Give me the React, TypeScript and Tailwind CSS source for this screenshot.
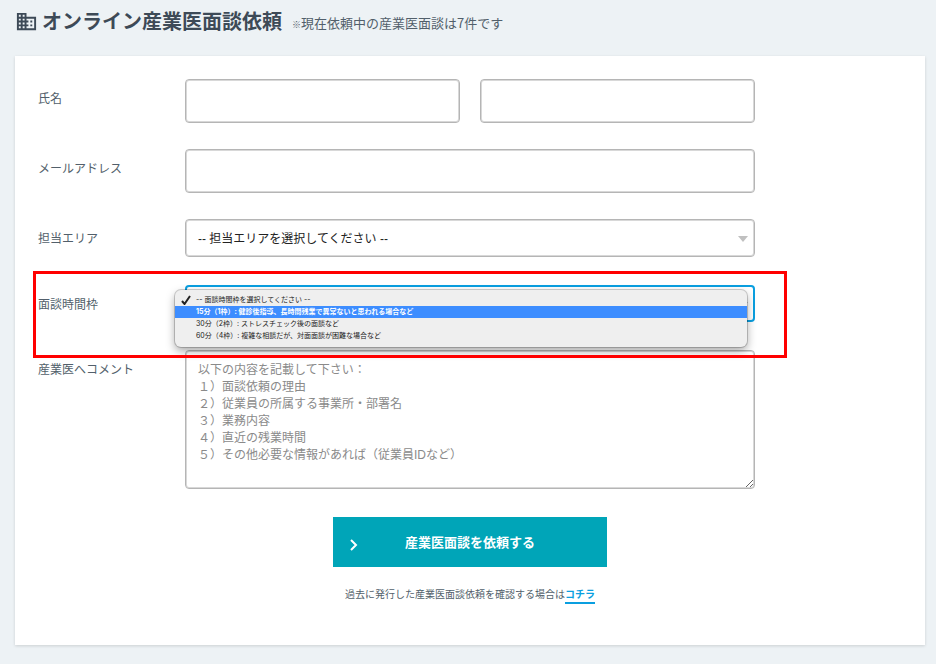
import { useState } from 'react';
import type { ReactNode } from 'react';
import { MdOutlineDomain } from 'react-icons/md';

const TIME_SLOTS = [
  { value: '', label: '-- 面談時間枠を選択してください --' },
  { value: '15', label: '15分（1枠）: 健診後指導、長時間残業で異常ないと思われる場合など' },
  { value: '30', label: '30分（2枠）: ストレスチェック後の面談など' },
  { value: '60', label: '60分（4枠）: 複雑な相談だが、対面面談が困難な場合など' },
];

const COMMENT_PLACEHOLDER = [
  '以下の内容を記載して下さい：',
  '１）面談依頼の理由',
  '２）従業員の所属する事業所・部署名',
  '３）業務内容',
  '４）直近の残業時間',
  '５）その他必要な情報があれば（従業員IDなど）',
].join('\n');

const field =
  "w-full rounded border border-[#b5b5b5] bg-white font-['Liberation_Sans','Noto_Sans_CJK_JP',sans-serif] text-xs text-[#222] shadow-[inset_0_0_0_1px_#d8d8d8] outline-none";

function Row({ label, htmlFor, children }: { label: string; htmlFor: string; children: ReactNode }) {
  return (
    <div className="relative flex items-start">
      <label htmlFor={htmlFor} className="w-[147px] shrink-0 pt-[10px] text-xs leading-[18px] text-[#525f6b]">
        {label}
      </label>
      <div className="relative min-w-0 flex-1">{children}</div>
    </div>
  );
}

function Arrow() {
  return (
    <svg viewBox="0 0 10 6" className="pointer-events-none absolute top-[17px] right-[7px] h-[6px] w-[10px] fill-[#c0c0c0]">
      <path d="M0 0h10L5 6z" />
    </svg>
  );
}

function SlotMenu({ selected, active, onSelect }: { selected: string; active: string; onSelect: (v: string) => void }) {
  return (
    <ul
      role="listbox"
      aria-label="面談時間枠"
      className="absolute top-[5px] right-2 -left-[10px] z-10 rounded-md bg-[#efefef] pt-1 pb-[5px] font-[Inter,'Noto_Sans_CJK_JP',sans-serif] text-[7px] leading-3 text-[#222] shadow-[0_0_0_1px_rgba(0,0,0,0.18),0_4px_10px_rgba(0,0,0,0.35)]"
    >
      {TIME_SLOTS.map((s) => (
        <li
          key={s.value}
          role="option"
          aria-selected={s.value === selected}
          onClick={() => onSelect(s.value)}
          className={
            s.value === active
              ? 'flex h-3 items-center bg-[#3d8dff] font-bold text-white'
              : 'flex h-3 items-center'
          }
        >
          <span className="flex w-[21px] justify-center">
            {s.value === selected && (
              <svg viewBox="0 0 10 10" className="h-[10px] w-[10px] fill-none stroke-[#222] stroke-2">
                <path d="M1 6l2.5 3L9 1" />
              </svg>
            )}
          </span>
          <span className="whitespace-nowrap">{s.label}</span>
        </li>
      ))}
    </ul>
  );
}

export default function App() {
  const [slot, setSlot] = useState('');

  return (
    <div className="min-h-screen bg-[#edf2f5] pr-[11px] pb-[19px] pl-[15px] font-['Noto_Sans_CJK_JP',sans-serif] text-[#3d4a57]">
      <header className="flex h-14 items-start pt-[6px]">
        <MdOutlineDomain className="mt-1 mr-1 size-[23px] shrink-0" />
        <h1 className="text-xl leading-[30px] font-bold whitespace-nowrap">オンライン産業医面談依頼</h1>
        <p className="ml-[10px] pt-[7px] text-[13px] leading-5 whitespace-nowrap text-[#525f6b]">
          <span className="text-[9px]">※</span>現在依頼中の産業医面談は7件です
        </p>
      </header>

      <main className="bg-white px-[23px] pt-[23px] pb-[41px] shadow-[0_1px_3px_rgba(0,0,0,0.14)]">
        <form className="max-w-[717px]" onSubmit={(e) => e.preventDefault()}>
          <div className="flex flex-col gap-[26px]">
            <Row label="氏名" htmlFor="last-name">
              <div className="grid grid-cols-2 gap-5">
                <input id="last-name" type="text" className={`${field} h-11 px-3`} />
                <input id="first-name" type="text" aria-label="名" className={`${field} h-11 px-3`} />
              </div>
            </Row>

            <Row label="メールアドレス" htmlFor="email">
              <input id="email" type="email" className={`${field} block h-11 px-3`} />
            </Row>

            <div className="flex flex-col gap-7">
              <Row label="担当エリア" htmlFor="area">
                <select id="area" className={`${field} block h-[38px] appearance-none px-3 pt-px`}>
                  <option>-- 担当エリアを選択してください --</option>
                </select>
                <Arrow />
              </Row>

              <div className="relative">
                <Row label="面談時間枠" htmlFor="slot">
                  <select
                    id="slot"
                    value={slot}
                    onChange={(e) => setSlot(e.target.value)}
                    className="block h-[37px] w-full appearance-none rounded border-2 border-[#0a9fe0] bg-white px-3 text-xs text-transparent outline-none"
                  >
                    {TIME_SLOTS.map((s) => (
                      <option key={s.value} value={s.value}>{s.label}</option>
                    ))}
                  </select>
                  <Arrow />
                  <SlotMenu selected={slot} active="15" onSelect={setSlot} />
                </Row>
                <div className="pointer-events-none absolute -top-[14px] -right-8 -left-[5px] z-20 h-[87px] border-3 border-[#ff0000]" />
              </div>

              <Row label="産業医へコメント" htmlFor="comment">
                <textarea
                  id="comment"
                  placeholder={COMMENT_PLACEHOLDER}
                  className={`${field} block h-[139px] resize px-3 py-[11px] leading-[17px] placeholder:text-[#8a8a8a]`}
                />
              </Row>
            </div>
          </div>

          <div className="mt-7 flex flex-col items-center pl-[147px]">
            <button type="submit" className="relative h-[50px] w-[274px] bg-[#00a5b8] text-[13px] font-bold text-white">
              <svg viewBox="0 0 8 12" className="absolute top-[22px] left-[17px] h-3 w-2 fill-none stroke-white stroke-2">
                <path d="M1 1l5 5-5 5" />
              </svg>
              産業医面談を依頼する
            </button>
            <p className="mt-[18px] text-[10px] leading-[18px] text-[#525f6b]">
              過去に発行した産業医面談依頼を確認する場合は
              <a href="#history" className="inline-block border-b-2 border-[#0a9fe0] leading-4 font-bold text-[#0a9fe0]">コチラ</a>
            </p>
          </div>
        </form>
      </main>
    </div>
  );
}
